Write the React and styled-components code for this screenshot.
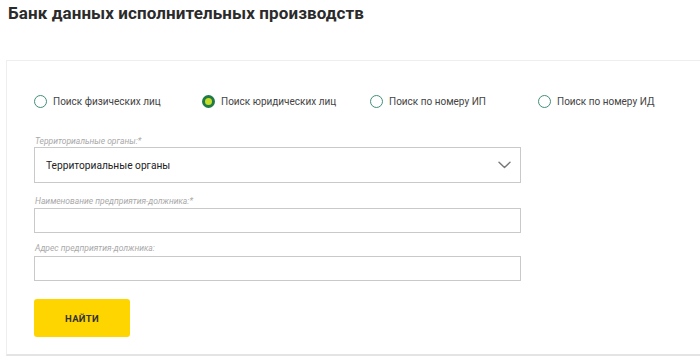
import React, { useState } from "react";
import styled, { createGlobalStyle } from "styled-components";

const Global = createGlobalStyle`
  html, body { margin: 0; padding: 0; background: #ffffff; overflow: hidden; }
  body { font-family: Roboto, "Liberation Sans", Arial, sans-serif; }
`;

const Page = styled.div`
  width: 700px;
  height: 361px;
  display: flex;
  flex-direction: column;
  background: #fff;
`;

const Title = styled.h1`
  margin: 3px 0 0 8px;
  font-size: 17px;
  line-height: 20px;
  font-weight: 700;
  color: #2b2b2b;
  letter-spacing: 0.1px;
`;

const Card = styled.div`
  margin: 37px 0 0 6px;
  width: 720px;
  height: 296px;
  box-sizing: border-box;
  border: 1px solid #eeeeee;
  border-bottom: 2px solid #e4e4e4;
  background: #fff;
  padding: 32px 0 0 27px;
  display: flex;
  flex-direction: column;
`;

const RadioRow = styled.div`
  display: grid;
  grid-template-columns: repeat(4, 168px);
  height: 16px;
  align-items: center;
`;

const RadioItem = styled.label`
  display: flex;
  align-items: center;
  gap: 6px;
  font-size: 10px;
  color: #444;
  cursor: pointer;
  white-space: nowrap;
`;

const RadioCircle = styled.span`
  width: 13px;
  height: 13px;
  box-sizing: border-box;
  border-radius: 50%;
  border: ${p => (p.$checked ? "3.5px solid #1f7a47" : "1.5px solid #3f8f7a")};
  background: ${p => (p.$checked ? "#c6dc2a" : "#fff")};
  flex: none;
`;

const Fields = styled.div`
  margin-top: 27px;
  width: 487px;
  display: flex;
  flex-direction: column;
`;

const FieldLabel = styled.div`
  font-size: 8.5px;
  font-style: italic;
  color: #a9a9a9;
  line-height: 10px;
  margin: ${p => p.$mt || 0}px 0 ${p => p.$mb || 1}px 1px;
`;

const SelectBox = styled.div`
  height: 36px;
  box-sizing: border-box;
  border: 1px solid #c9c9c9;
  display: flex;
  align-items: center;
  justify-content: space-between;
  padding: 0 9px 0 11px;
  font-size: 10.2px;
  color: #222;
`;

const TextInput = styled.input`
  height: 25px;
  box-sizing: border-box;
  border: 1px solid #c9c9c9;
  border-radius: 0;
  outline: none;
  padding: 0 10px;
  font: inherit;
  font-size: 10.2px;
  background: #fff;
`;

const Button = styled.button`
  margin-top: 18px;
  width: 96px;
  height: 38px;
  border: none;
  border-radius: 3px;
  background: #ffd500;
  color: #333;
  font-family: inherit;
  font-size: 9.5px;
  font-weight: 700;
  letter-spacing: 0.3px;
  cursor: pointer;
`;

const Chevron = () => (
  <svg width="13" height="8" viewBox="0 0 13 8" fill="none">
    <path d="M1 1.2 L6.5 6.5 L12 1.2" stroke="#777" strokeWidth="1.4" strokeLinecap="round" strokeLinejoin="round" />
  </svg>
);

const options = [
  "Поиск физических лиц",
  "Поиск юридических лиц",
  "Поиск по номеру ИП",
  "Поиск по номеру ИД",
];

export default function App() {
  const [sel, setSel] = useState(1);
  return (
    <Page>
      <Global />
      <Title>Банк данных исполнительных производств</Title>
      <Card>
        <RadioRow>
          {options.map((o, i) => (
            <RadioItem key={o} onClick={() => setSel(i)}>
              <RadioCircle $checked={sel === i} />
              {o}
            </RadioItem>
          ))}
        </RadioRow>
        <Fields>
          <FieldLabel>Территориальные органы:*</FieldLabel>
          <SelectBox>
            <span>Территориальные органы</span>
            <Chevron />
          </SelectBox>
          <FieldLabel $mt={13} $mb={2}>Наименование предприятия-должника:*</FieldLabel>
          <TextInput />
          <FieldLabel $mt={10} $mb={3}>Адрес предприятия-должника:</FieldLabel>
          <TextInput />
        </Fields>
        <Button>НАЙТИ</Button>
      </Card>
    </Page>
  );
}
